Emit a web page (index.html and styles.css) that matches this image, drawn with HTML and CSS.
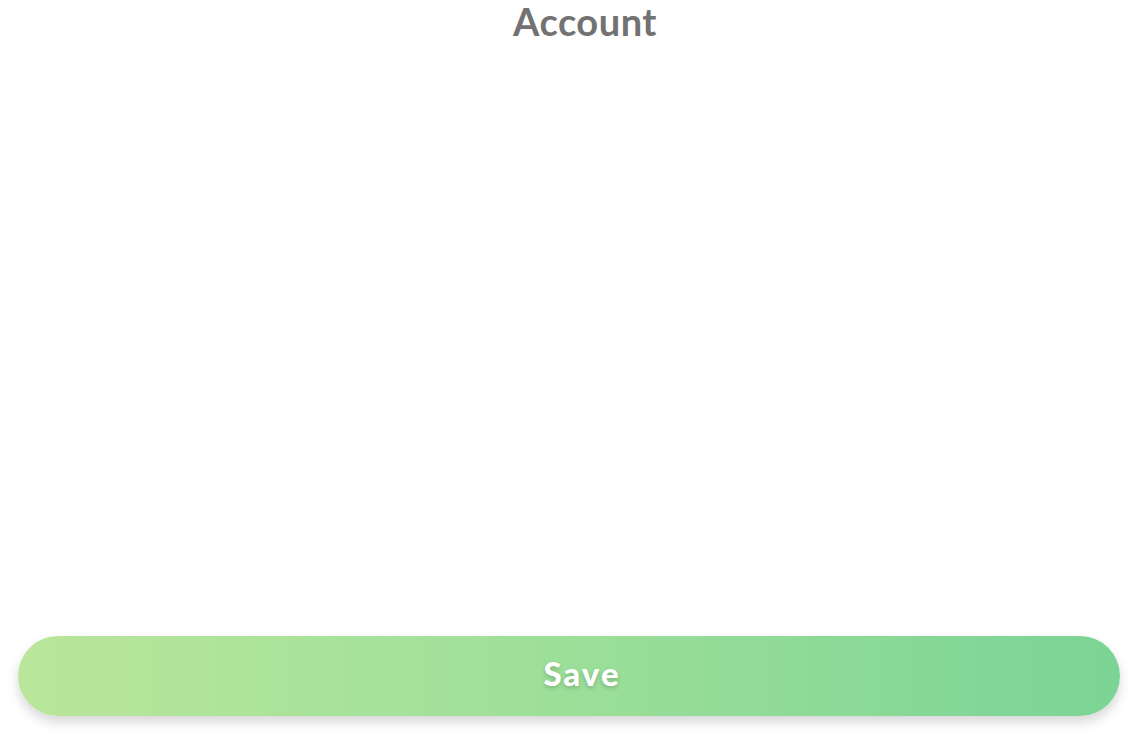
FILE: index.html
```html
<!DOCTYPE html>
<html>
<head>
<meta charset="utf-8">
<link rel="stylesheet" href="styles.css">
</head>
<body>
<div class="page">
  <header class="header"><h1 class="title">Account</h1></header>
  <main class="content"></main>
  <footer class="footer"><button class="save-btn"><span class="save-label">Save</span></button></footer>
</div>
</body>
</html>
```
FILE: styles.css
```css
html, body { margin: 0; padding: 0; background: #fff; }
body { font-family: "Lato", "Liberation Sans", sans-serif; }
.page { height: 741px; display: flex; flex-direction: column; }
.header { display: flex; justify-content: center; padding: 1px 0 0 32px; }
.title { margin: 0; font-size: 38px; line-height: 40px; font-weight: 700; color: #727272; letter-spacing: 0.5px; }
.content { flex: 1; }
.footer { padding: 0 18px 25px 18px; }
.save-btn {
  display: flex; align-items: center; justify-content: center;
  width: 100%; height: 80px; border: none; border-radius: 40px;
  background: linear-gradient(90deg, #b9e69a 0%, #a2e19a 40%, #7bd495 100%);
  box-shadow: 0 6px 12px rgba(0,0,0,0.16);
  padding: 0 0 6px 26px;
  font-family: inherit;
}
.save-label { color: #fff; font-size: 33px; font-weight: 900; letter-spacing: 2px; text-shadow: 0 2px 4px rgba(0,0,0,0.2); }
```
